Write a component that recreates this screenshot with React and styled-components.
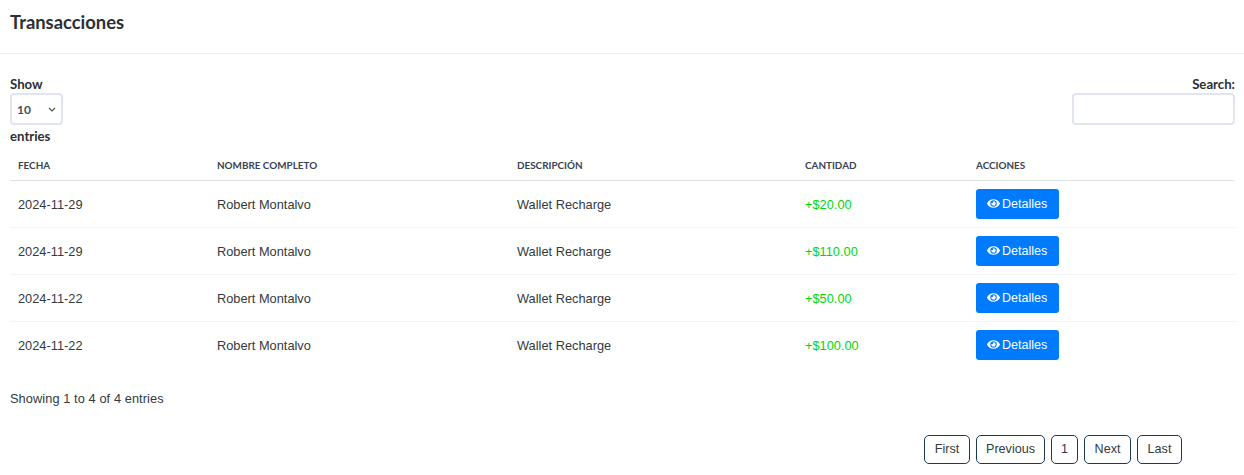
import React from "react";
import styled, { createGlobalStyle } from "styled-components";
import { FaEye } from "react-icons/fa";

const Global = createGlobalStyle`
  html, body { margin: 0; padding: 0; background: #fff; }
  body { font-family: "Liberation Sans", Arial, sans-serif; font-size: 14px; color: #343a40; }
`;

const Page = styled.div`
  width: 1244px;
  height: 475px;
  overflow: hidden;
  box-sizing: border-box;
`;
const Header = styled.header`
  height: 54px;
  box-sizing: border-box;
  border-bottom: 1px solid #e9ecf2;
  padding: 0 10px;
  display: flex;
  align-items: flex-start;
`;
const Title = styled.h1`
  margin: 11px 0 0;
  font: 700 18.4px/22px Lato, sans-serif;
  color: #2b2f36;
`;
const Body = styled.section`
  padding: 22px 9px 0 10px;
`;
const Controls = styled.div`
  display: flex;
  justify-content: space-between;
  align-items: flex-start;
`;
const FieldLabel = styled.label`
  display: flex;
  flex-direction: column;
  align-items: ${(p) => (p.$right ? "flex-end" : "flex-start")};
  font: 700 13.2px/16px Lato, sans-serif;
  color: #2b2f36;
`;
const LabelText = styled.span`
  height: 17px;
`;
const SelectBox = styled.div`
  width: 53px;
  height: 32px;
  box-sizing: border-box;
  border: 2px solid #e1e5ef;
  border-radius: 4px;
  display: flex;
  align-items: center;
  justify-content: space-between;
  padding: 0 4px 0 5px;
  margin-bottom: 3px;
  font: 700 12px Lato, sans-serif;
  color: #495057;
`;
const SearchInput = styled.input`
  width: 163px;
  height: 32px;
  box-sizing: border-box;
  border: 2px solid #e1e5ef;
  border-radius: 4px;
  background: #fff;
  outline: none;
`;
const Table = styled.table`
  width: 1225px;
  border-collapse: collapse;
  table-layout: fixed;
  margin-top: 5px;
`;
const Th = styled.th`
  width: ${(p) => p.$w}px;
  height: 31px;
  box-sizing: border-box;
  padding: 2px 8px 0;
  text-align: left;
  font: 700 9.9px/12px Lato, sans-serif;
  text-transform: uppercase;
  color: #3a4354;
  border-bottom: 1px solid #dee2e6;
`;
const Row = styled.tr`
  height: 47px;
  border-bottom: 1px solid ${(p) => (p.$last ? "transparent" : "#f1f3f5")};
`;
const Td = styled.td`
  padding: ${(p) => (p.$flush ? "0 8px" : "2px 8px 0")};
  font-size: 12.8px;
  color: ${(p) => p.$color || "#343a40"};
`;
const DetailButton = styled.button`
  display: inline-flex;
  align-items: center;
  gap: 2px;
  height: 30px;
  width: 83px;
  box-sizing: border-box;
  padding: 0 0 0 11px;
  border: 0;
  border-radius: 3px;
  background: #007bff;
  color: #fff;
  font: 12.5px "Liberation Sans", Arial, sans-serif;
`;
const Info = styled.p`
  margin: 22px 0 0;
  font-size: 12.8px;
  letter-spacing: 0.08px;
  line-height: 15px;
  color: #343a40;
`;
const Pager = styled.nav`
  display: flex;
  gap: 6px;
  margin: 29px 0 0 914px;
`;
const PageButton = styled.button`
  width: ${(p) => p.$w}px;
  height: 29px;
  box-sizing: border-box;
  padding: 0;
  background: #fff;
  border: 1px solid #1b3a57;
  border-radius: 5px;
  font: 12.6px "Liberation Sans", Arial, sans-serif;
  color: #343a40;
`;

const rows = [
  ["2024-11-29", "+$20.00"],
  ["2024-11-29", "+$110.00"],
  ["2024-11-22", "+$50.00"],
  ["2024-11-22", "+$100.00"],
];

export default function App() {
  return (
    <Page>
      <Global />
      <Header>
        <Title>Transacciones</Title>
      </Header>
      <Body>
        <Controls>
          <FieldLabel>
            <LabelText>Show</LabelText>
            <SelectBox>
              10
              <svg width="10" height="10" viewBox="0 0 10 10" fill="none" stroke="#495057" strokeWidth="1.2">
                <path d="M2 4l3 3 3-3" />
              </svg>
            </SelectBox>
            entries
          </FieldLabel>
          <FieldLabel $right>
            <LabelText>Search:</LabelText>
            <SearchInput type="text" />
          </FieldLabel>
        </Controls>
        <Table>
          <thead>
            <tr>
              <Th $w={199}>Fecha</Th>
              <Th $w={300}>Nombre completo</Th>
              <Th $w={288}>Descripción</Th>
              <Th $w={171}>Cantidad</Th>
              <Th $w={267}>Acciones</Th>
            </tr>
          </thead>
          <tbody>
            {rows.map(([date, amount], i) => (
              <Row key={i} $last={i === rows.length - 1}>
                <Td>{date}</Td>
                <Td>Robert Montalvo</Td>
                <Td>Wallet Recharge</Td>
                <Td $color="#00d60b">{amount}</Td>
                <Td $flush>
                  <DetailButton>
                    <FaEye size={13} />
                    Detalles
                  </DetailButton>
                </Td>
              </Row>
            ))}
          </tbody>
        </Table>
        <Info>Showing 1 to 4 of 4 entries</Info>
        <Pager>
          <PageButton $w={46}>First</PageButton>
          <PageButton $w={69}>Previous</PageButton>
          <PageButton $w={27}>1</PageButton>
          <PageButton $w={47}>Next</PageButton>
          <PageButton $w={45}>Last</PageButton>
        </Pager>
      </Body>
    </Page>
  );
}
